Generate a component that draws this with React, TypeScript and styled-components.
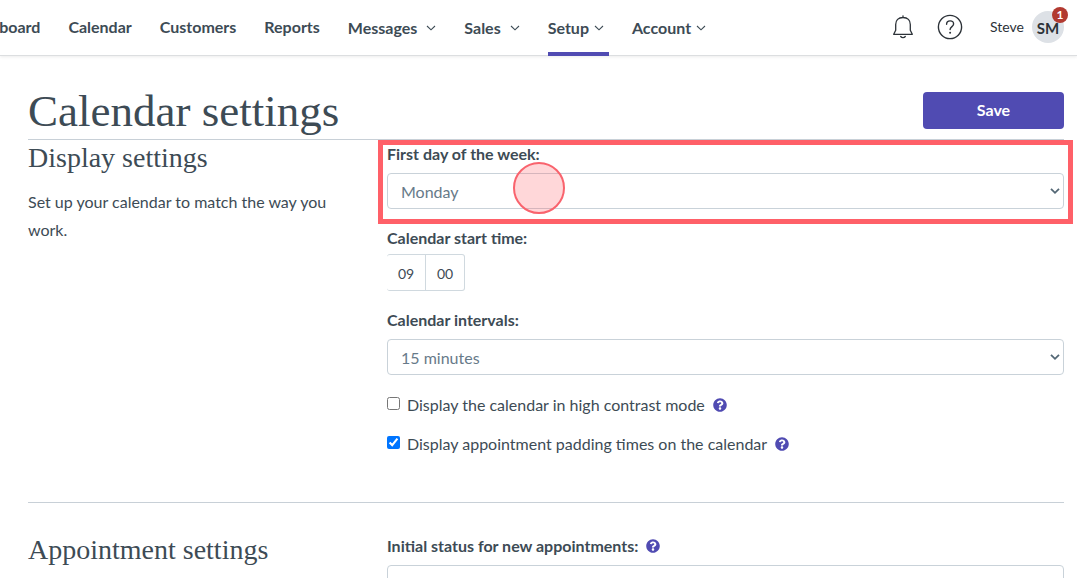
import React from "react";
import styled, { createGlobalStyle } from "styled-components";
import { FaQuestionCircle } from "react-icons/fa";

const GlobalStyle = createGlobalStyle`
  *, *::before, *::after { box-sizing: border-box; }
  body {
    margin: 0;
    background: #fff;
    color: #3d4b55;
    font-family: Lato, "Liberation Sans", sans-serif;
    font-size: 16px;
    overflow-x: hidden;
  }
  h1, h2, p, ul { margin: 0; padding: 0; }
  button, input, select { font-family: inherit; }
`;

const Header = styled.header`
  display: flex;
  justify-content: space-between;
  height: 56px;
  padding-right: 13px;
  box-shadow: inset 0 -1px #dcdee0, 0 1px 3px rgba(0, 0, 0, 0.08);
`;

const Nav = styled.nav`
  overflow: hidden;
`;

const NavList = styled.ul`
  display: flex;
  gap: 28px;
  margin-left: -37px;
  list-style: none;
`;

const NavLink = styled.a<{ $active?: boolean; $compact?: boolean; $menu?: boolean }>`
  display: flex;
  align-items: center;
  gap: ${(p) => (p.$compact ? 5 : 9)}px;
  height: 56px;
  margin-right: ${(p) => (p.$active ? -5 : 0)}px;
  padding: ${(p) => (p.$menu ? 2 : 0)}px ${(p) => (p.$active ? 5 : 0)}px 0 0;
  border-bottom: 4px solid ${(p) => (p.$active ? "#504bb2" : "transparent")};
  color: #3d4b55;
  font-weight: 700;
  text-decoration: none;
  white-space: nowrap;
`;

const ChevronIcon = styled.svg`
  margin-top: 2px;
`;

const Tools = styled.div`
  display: flex;
  align-items: center;
  height: 53px;
`;

const IconButton = styled.button`
  display: flex;
  margin: 0 23px 0 0;
  padding: 0;
  border: 0;
  background: none;
  color: #2c3238;
`;

const UserButton = styled.button`
  position: relative;
  display: flex;
  align-items: center;
  gap: 8px;
  margin-left: 4px;
  padding: 0;
  border: 0;
  background: none;
  color: #2c3238;
  font-size: 14px;
`;

const Avatar = styled.span`
  width: 32px;
  height: 32px;
  border-radius: 50%;
  background: #dde1e6;
  font-size: 15px;
  font-weight: 700;
  line-height: 34px;
  text-align: center;
`;

const Badge = styled.span`
  position: absolute;
  top: -4px;
  right: -4px;
  width: 16px;
  height: 16px;
  border-radius: 50%;
  background: #b23a30;
  color: #fff;
  font-size: 12px;
  font-weight: 700;
  line-height: 16px;
`;

const Page = styled.main`
  padding: 0 13px 0 28px;
`;

const TitleRow = styled.div`
  display: flex;
  align-items: flex-end;
  justify-content: space-between;
  height: 84px;
  padding-bottom: 10px;
  border-bottom: 1px solid #c8d0d7;
`;

const Title = styled.h1`
  font-family: "Liberation Serif", serif;
  font-size: 45px;
  font-weight: 400;
  line-height: 36px;
`;

const SaveButton = styled.button`
  width: 141px;
  height: 37px;
  padding: 0 0 2px;
  border: 0;
  border-radius: 4px;
  background: #504bb2;
  color: #fff;
  font-size: 16px;
  font-weight: 700;
`;

const Section = styled.section<{ $first?: boolean }>`
  display: grid;
  grid-template-columns: 359fr 677fr;
  padding: ${(p) => (p.$first ? 2 : 31)}px 0 48px;
  border-bottom: 1px solid #c8d0d7;
`;

const Intro = styled.div`
  padding-right: 32px;
`;

const SectionTitle = styled.h2`
  font-family: "Liberation Serif", serif;
  font-size: 28px;
  font-weight: 400;
  line-height: 32px;
`;

const Description = styled.p`
  margin-top: 14px;
  line-height: 28px;
`;

const Fields = styled.div`
  display: flex;
  flex-direction: column;
  gap: 19px;
  padding-top: 2px;
`;

const Field = styled.div`
  position: relative;
`;

const FieldSet = styled.fieldset`
  min-width: 0;
  margin: 0;
  padding: 0;
  border: 0;
`;

const LabelRow = styled.div`
  display: flex;
  align-items: center;
  gap: 8px;
  margin-bottom: 9px;
`;

const Label = styled.label`
  font-weight: 700;
  line-height: 20px;
`;

const Legend = styled.legend`
  margin-bottom: 6px;
  padding: 0;
  font-weight: 700;
  line-height: 20px;
`;

const SelectBox = styled.div`
  position: relative;
  display: flex;
`;

const Select = styled.select`
  width: 100%;
  height: 36px;
  padding: 0 13px;
  appearance: none;
  border: 1px solid #c9d2d9;
  border-radius: 4px;
  background: #fff;
  color: #677a89;
  font-size: 16px;
`;

const SelectArrow = styled.svg`
  position: absolute;
  top: 14px;
  right: 4px;
  pointer-events: none;
`;

const TimeInputs = styled.div`
  display: flex;
`;

const TimeInput = styled.input`
  width: 39px;
  height: 37px;
  padding: 2px 0 0;
  border: 1px solid #d0d9df;
  border-left-width: 0;
  border-radius: 3px 0 0 3px;
  color: #3d4b55;
  font-size: 14px;
  text-align: center;

  & + & {
    border-radius: 0 3px 3px 0;
  }
`;

const CheckList = styled.div`
  display: flex;
  flex-direction: column;
  gap: 19px;
  padding-top: 1px;
`;

const CheckRow = styled.div`
  display: flex;
  align-items: center;
  gap: 8px;
  height: 20px;
`;

const CheckLabel = styled.label`
  display: flex;
  align-items: center;
  gap: 7px;
  line-height: 20px;
`;

const Checkbox = styled.input`
  width: 13px;
  height: 13px;
  margin: 0 0 4px;
`;

const HelpButton = styled.button`
  display: flex;
  padding: 0;
  border: 0;
  background: none;
  color: #504bb2;
  font-size: 14px;
`;

const Highlight = styled.div`
  position: absolute;
  inset: -4px -9px -15px;
  border: 5px solid #ff6068;
  pointer-events: none;
`;

const ClickMarker = styled.div`
  position: absolute;
  top: -11px;
  left: 126px;
  width: 52px;
  height: 52px;
  border: 2px solid #f9636d;
  border-radius: 50%;
  background: rgba(255, 96, 104, 0.25);
  pointer-events: none;
`;

function Chevron() {
  return (
    <ChevronIcon width="10" height="6" viewBox="0 0 10 6" fill="none" stroke="currentColor" strokeWidth="1.1" aria-hidden>
      <path d="M1 1l4 3.8L9 1" />
    </ChevronIcon>
  );
}

function Help({ topic }: { topic: string }) {
  return (
    <HelpButton type="button" aria-label={`Help: ${topic}`}>
      <FaQuestionCircle />
    </HelpButton>
  );
}

function SelectField({ id, options, children }: { id: string; options: string[]; children?: React.ReactNode }) {
  return (
    <SelectBox>
      <Select id={id}>
        {options.map((o) => (
          <option key={o}>{o}</option>
        ))}
      </Select>
      <SelectArrow width="10" height="8" viewBox="0 0 10 8" fill="none" stroke="#536775" strokeWidth="1.8" aria-hidden>
        <path d="M1 1.8l4 4 4-4" />
      </SelectArrow>
      {children}
    </SelectBox>
  );
}

const navItems = [
  { text: "Dashboard" },
  { text: "Calendar" },
  { text: "Customers" },
  { text: "Reports" },
  { text: "Messages", menu: true },
  { text: "Sales", menu: true },
  { text: "Setup", menu: true, active: true, compact: true },
  { text: "Account", menu: true, compact: true },
];

export default function App() {
  return (
    <>
      <GlobalStyle />
      <Header>
        <Nav>
          <NavList>
            {navItems.map((item) => (
              <li key={item.text}>
                <NavLink href="#" $active={item.active} $compact={item.compact} $menu={item.menu}>
                  {item.text}
                  {item.menu && <Chevron />}
                </NavLink>
              </li>
            ))}
          </NavList>
        </Nav>
        <Tools>
          <IconButton type="button" aria-label="Notifications">
            <svg width="22" height="24" viewBox="0 0 22 24" fill="none" stroke="currentColor" strokeWidth="1.3" strokeLinejoin="round" strokeLinecap="round" aria-hidden>
              <path d="M11 .8v1.7M11 2.500c-4.700 0-7.300 3-7.300 7v5.700L1.700 19.300h18.600l-2-4.100V9.500c0-4-2.600-7-7.300-7z" />
              <path d="M8.700 21.500c.6.8 1.300 1.200 2.300 1.200s1.700-.4 2.300-1.200" />
            </svg>
          </IconButton>
          <IconButton type="button" aria-label="Help">
            <svg width="26" height="26" viewBox="0 0 26 26" fill="none" stroke="currentColor" strokeWidth="1.4" aria-hidden>
              <circle cx="13" cy="13" r="11.6" />
              <path d="M9.600 10.300c0-2 1.400-3.400 3.500-3.400s3.500 1.300 3.500 3.100c0 2.600-3.500 2.600-3.500 5.500" strokeLinecap="round" />
              <circle cx="13.1" cy="18.700" r="1" fill="currentColor" stroke="none" />
            </svg>
          </IconButton>
          <UserButton type="button">
            Steve
            <Avatar>SM</Avatar>
            <Badge>1</Badge>
          </UserButton>
        </Tools>
      </Header>
      <Page>
        <TitleRow>
          <Title>Calendar settings</Title>
          <SaveButton type="button">Save</SaveButton>
        </TitleRow>
        <Section $first>
          <Intro>
            <SectionTitle>Display settings</SectionTitle>
            <Description>Set up your calendar to match the way you work.</Description>
          </Intro>
          <Fields>
            <Field>
              <LabelRow>
                <Label htmlFor="first-day">First day of the week:</Label>
              </LabelRow>
              <SelectField id="first-day" options={["Monday", "Sunday"]}>
                <ClickMarker />
              </SelectField>
              <Highlight />
            </Field>
            <FieldSet>
              <Legend>Calendar start time:</Legend>
              <TimeInputs>
                <TimeInput aria-label="Start hour" defaultValue="09" />
                <TimeInput aria-label="Start minute" defaultValue="00" />
              </TimeInputs>
            </FieldSet>
            <Field>
              <LabelRow>
                <Label htmlFor="intervals">Calendar intervals:</Label>
              </LabelRow>
              <SelectField id="intervals" options={["15 minutes", "30 minutes"]} />
            </Field>
            <CheckList>
              <CheckRow>
                <CheckLabel>
                  <Checkbox type="checkbox" />
                  Display the calendar in high contrast mode
                </CheckLabel>
                <Help topic="high contrast mode" />
              </CheckRow>
              <CheckRow>
                <CheckLabel>
                  <Checkbox type="checkbox" defaultChecked />
                  Display appointment padding times on the calendar
                </CheckLabel>
                <Help topic="padding times" />
              </CheckRow>
            </CheckList>
          </Fields>
        </Section>
        <Section>
          <Intro>
            <SectionTitle>Appointment settings</SectionTitle>
          </Intro>
          <Fields>
            <Field>
              <LabelRow>
                <Label htmlFor="initial-status">Initial status for new appointments:</Label>
                <Help topic="initial status" />
              </LabelRow>
              <SelectField id="initial-status" options={[""]} />
            </Field>
          </Fields>
        </Section>
      </Page>
    </>
  );
}
